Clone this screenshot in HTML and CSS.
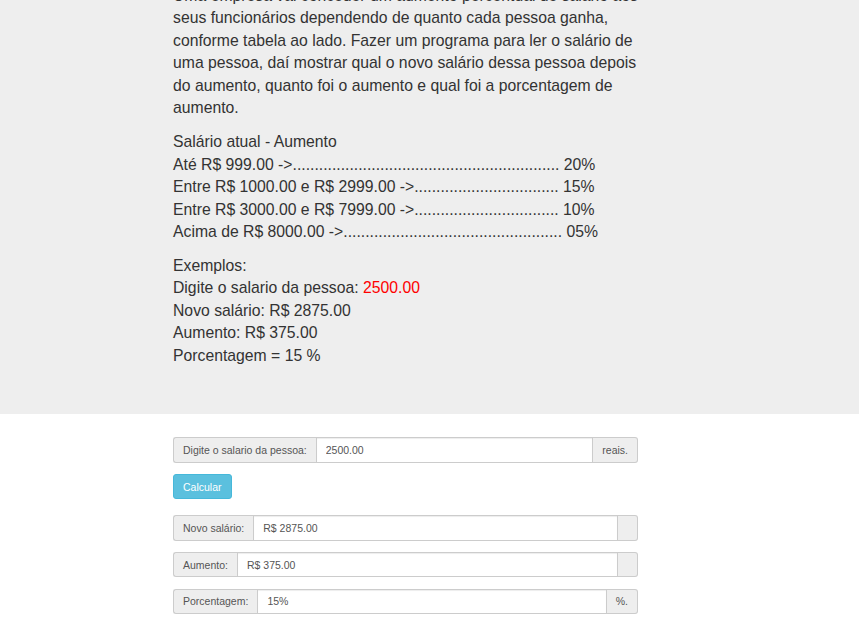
FILE: index.html
```html
<!DOCTYPE html>
<html lang="pt-BR">
<head>
<meta charset="utf-8">
<title>Aumento salarial</title>
<link rel="stylesheet" href="styles.css">
</head>
<body>
<div class="page">
  <div class="jumbotron">
    <div class="container">
      <p>Uma empresa vai conceder um aumento percentual de salário aos seus funcionários dependendo de quanto cada pessoa ganha, conforme tabela ao lado. Fazer um programa para ler o salário de uma pessoa, daí mostrar qual o novo salário dessa pessoa depois do aumento, quanto foi o aumento e qual foi a porcentagem de aumento.</p>
      <p>Salário atual - Aumento<br>
      Até R$ 999.00 -&gt;............................................................. 20%<br>
      Entre R$ 1000.00 e R$ 2999.00 -&gt;................................. 15%<br>
      Entre R$ 3000.00 e R$ 7999.00 -&gt;................................. 10%<br>
      Acima de R$ 8000.00 -&gt;.................................................. 05%</p>
      <p>Exemplos:<br>
      Digite o salario da pessoa: <span class="red">2500.00</span><br>
      Novo salário: R$ 2875.00<br>
      Aumento: R$ 375.00<br>
      Porcentagem = 15 %</p>
    </div>
  </div>
  <div class="container form">
    <div class="input-group first">
      <span class="addon addon-left">Digite o salario da pessoa:</span>
      <input class="control" type="text" value="2500.00">
      <span class="addon addon-right">reais.</span>
    </div>
    <button class="btn-info" type="button">Calcular</button>
    <div class="results">
      <div class="input-group">
        <span class="addon addon-left">Novo salário:</span>
        <input class="control" type="text" value="R$ 2875.00">
        <span class="addon addon-right"></span>
      </div>
      <div class="input-group">
        <span class="addon addon-left">Aumento:</span>
        <input class="control" type="text" value="R$ 375.00">
        <span class="addon addon-right"></span>
      </div>
      <div class="input-group">
        <span class="addon addon-left">Porcentagem:</span>
        <input class="control" type="text" value="15%">
        <span class="addon addon-right">%.</span>
      </div>
    </div>
  </div>
</div>
</body>
</html>
```

FILE: styles.css
```css
* { box-sizing: border-box; }
html, body {
  margin: 0;
  padding: 0;
  background: #fff;
  font-family: "Liberation Sans", Arial, Helvetica, sans-serif;
  color: #333;
  overflow: hidden;
}
.page {
  margin-top: -15.25px;
}
.container {
  width: 465px;
  margin-left: 173px;
}
.jumbotron {
  background: #eee;
  padding: 0 0 35px 0;
  margin-bottom: 23.5px;
}
.jumbotron p {
  margin: 0 0 11.25px 0;
  font-size: 15.75px;
  line-height: 22.5px;
}
.red { color: red; }

.form {
  font-size: 10.5px;
}
.input-group {
  display: flex;
  height: 25.5px;
  margin-bottom: 11.25px;
}
.results {
  margin-top: 15.75px;
}
.addon {
  display: flex;
  align-items: center;
  justify-content: center;
  padding: 0 9px;
  background: #eee;
  border: 1px solid #ccc;
  color: #555;
  font-size: 10.5px;
  white-space: nowrap;
}
.addon-left {
  border-right: 0;
  border-radius: 3px 0 0 3px;
}
.addon-right {
  border-left: 0;
  border-radius: 0 3px 3px 0;
  min-width: 20px;
}
.control {
  flex: 1;
  min-width: 0;
  height: 100%;
  margin: 0;
  padding: 0 9px;
  border: 1px solid #ccc;
  border-radius: 0;
  background: #fff;
  color: #555;
  font-family: inherit;
  font-size: 10.5px;
  box-shadow: inset 0 1px 1px rgba(0,0,0,.075);
  outline: none;
}
.btn-info {
  display: block;
  height: 25.5px;
  padding: 0 9px;
  margin: 0;
  background: #5bc0de;
  border: 1px solid #46b8da;
  border-radius: 3px;
  color: #fff;
  font-family: inherit;
  font-size: 10.5px;
  cursor: pointer;
}
```
